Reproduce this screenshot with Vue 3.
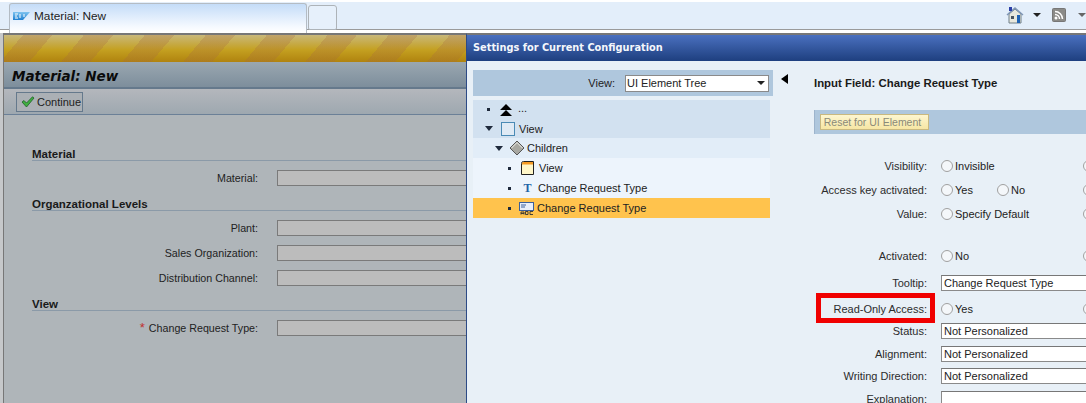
<template>
  <div class="page">
    <div class="tabbar">
      <div class="tab">
        <svg class="sap" width="17" height="8" viewBox="0 0 17 8">
          <defs>
            <linearGradient id="sapBlue" x1="0" y1="0" x2="0" y2="1">
              <stop offset="0" stop-color="#7fc4f0" />
              <stop offset="1" stop-color="#1f7fd0" />
            </linearGradient>
          </defs>
          <path d="M0 0H17L10 8H0Z" fill="url(#sapBlue)" />
          <path d="M2 2H5M2 4H4M2 6H5M7 2V6M11 2V5" stroke="#fff" stroke-width="1" fill="none" />
        </svg>
        <span>Material: New</span>
      </div>
      <div class="tab-empty"></div>
      <div class="tools">
        <svg width="18" height="18" viewBox="0 0 18 18">
          <path d="M3 8V17H15V8L9 3Z" fill="#e8e8de" stroke="#6f7f88" stroke-width="1" />
          <path d="M1 9L9 2L17 9" fill="none" stroke="#7f96b5" stroke-width="1.5" />
          <rect x="3" y="1" width="3" height="4" fill="#2b3fa8" />
          <rect x="11" y="9" width="3" height="8" fill="#1f63b5" />
          <rect x="5" y="10" width="3" height="3" fill="#4a5560" />
        </svg>
        <i class="caret"></i>
        <svg class="rss" width="14" height="14" viewBox="0 0 14 14">
          <rect x="0.5" y="0.5" width="13" height="13" rx="1" fill="#8b8b88" stroke="#777" />
          <circle cx="4" cy="10" r="1.5" fill="#fff" />
          <path d="M3 6.500A4.500 4.500 0 0 1 7.500 11M3 3.500A7.500 7.500 0 0 1 10.500 11" fill="none" stroke="#fff" stroke-width="1.500" />
        </svg>
        <i class="caret light"></i>
      </div>
    </div>

    <div class="main">
      <div class="left">
        <div class="stripes"></div>
        <div class="title">Material: New</div>
        <div class="toolbar">
          <button class="continue">
            <svg width="14" height="12" viewBox="0 0 14 12">
              <path d="M1 6L3 4.500L5.500 7L11.500 0.800L13 2L5.500 11Z" fill="#3fae3f" stroke="#1f5f2a" stroke-width="0.800" />
            </svg>
            Continue
          </button>
        </div>
        <div class="form">
          <template v-for="sec in sections" :key="sec.name">
            <div class="sec-head">{{ sec.name }}</div>
            <div class="sec-rows">
              <div v-for="f in sec.fields" :key="f.label" class="form-row">
                <label><span v-if="f.req" class="req">*</span>{{ f.label }}</label>
                <div class="grey-input"></div>
              </div>
            </div>
          </template>
        </div>
      </div>

      <div class="right">
        <div class="panel-head">Settings for Current Configuration</div>
        <div class="panel-body">
          <div class="tree-col">
            <div class="view-bar">
              <span>View:</span>
              <div class="select">
                UI Element Tree
                <i class="caret"></i>
              </div>
            </div>
            <div class="tree">
              <div class="node n0 first">
                <i class="dot"></i>
                <svg class="ico" width="12" height="12" viewBox="0 0 12 12">
                  <path d="M6 0L12 6H0ZM6 6L12 12H0Z" fill="#000" />
                </svg>
                <span class="dots">...</span>
              </div>
              <div class="node n0">
                <i class="tri"></i>
                <svg class="ico" width="14" height="14" viewBox="0 0 14 14">
                  <rect x="0.5" y="0.500" width="13" height="13" fill="#dfeaf5" stroke="#4a8ab5" />
                </svg>
                <span>View</span>
              </div>
              <div class="node n1">
                <i class="tri"></i>
                <svg class="ico" width="16" height="16" viewBox="0 0 16 16">
                  <path d="M8 1L15 8L8 15L1 8Z" fill="#a8a8a2" stroke="#555" />
                  <path d="M2.500 8L8 2.500L13.500 8" fill="none" stroke="#f4f4f0" />
                </svg>
                <span>Children</span>
              </div>
              <div class="node n2">
                <i class="dot"></i>
                <svg class="ico" width="13" height="14" viewBox="0 0 13 14">
                  <path d="M0.500 13.500V2.500Q0.500 0.500 2.500 0.500H12.500V13.500Z" fill="#fff6c8" stroke="#222" />
                  <path d="M1 3.500V2.500Q1 1 2.500 1H12V3.500Z" fill="#f59a23" />
                </svg>
                <span>View</span>
              </div>
              <div class="node n2">
                <i class="dot"></i>
                <span class="t-ico">T</span>
                <span>Change Request Type</span>
              </div>
              <div class="node n2 sel">
                <i class="dot"></i>
                <svg class="ico input-ico" width="15" height="13" viewBox="0 0 15 13">
                  <rect x="0.500" y="0.500" width="14" height="8" fill="#e8eef8" stroke="#3b5f9a" />
                  <path d="M2 3H7M2 5H6" stroke="#3b5f9a" />
                  <path d="M2 12.500V10H5V12.500M2 11.500H5M6.500 9.500V12.500H9L9 9.500ZM14 9.500H11V12.500H14" fill="none" stroke="#333" stroke-width="0.900" />
                </svg>
                <span>Change Request Type</span>
              </div>
            </div>
          </div>

          <div class="collapse"></div>

          <div class="detail">
            <div class="detail-title">Input Field: Change Request Type</div>
            <div class="reset-band"><button class="reset">Reset for UI Element</button></div>
            <div class="props">
              <div
                v-for="p in props"
                :key="p.label"
                class="prop"
                :class="p.cls"
              >
                <label>{{ p.label }}</label>
                <div v-if="p.input !== undefined" class="value-input">{{ p.input }}</div>
                <div v-else class="radios">
                  <span v-for="o in p.options" :key="o" class="radio-item">
                    <i class="radio"></i>{{ o }}
                  </span>
                  <i class="radio far"></i>
                </div>
              </div>
              <div class="red-box"></div>
            </div>
          </div>
        </div>
      </div>
    </div>
  </div>
</template>

<script setup>
const sections = [
  { name: 'Material', fields: [{ label: 'Material:' }] },
  {
    name: 'Organzational Levels',
    fields: [
      { label: 'Plant:' },
      { label: 'Sales Organization:' },
      { label: 'Distribution Channel:' },
    ],
  },
  { name: 'View', fields: [{ label: 'Change Request Type:', req: true }] },
]

const props = [
  { label: 'Visibility:', options: ['Invisible'], cls: 'h24' },
  { label: 'Access key activated:', options: ['Yes', 'No'], cls: 'h24' },
  { label: 'Value:', options: ['Specify Default'], cls: 'h24' },
  { label: 'Activated:', options: ['No'], cls: 'h24 gap-top' },
  { label: 'Tooltip:', input: 'Change Request Type', cls: 'h30' },
  { label: 'Read-Only Access:', options: ['Yes'], cls: 'h22' },
  { label: 'Status:', input: 'Not Personalized', cls: 'h22' },
  { label: 'Alignment:', input: 'Not Personalized', cls: 'h23' },
  { label: 'Writing Direction:', input: 'Not Personalized', cls: 'h22' },
  { label: 'Explanation:', input: '', cls: 'h24' },
]
</script>

<style>
html, body { margin: 0; background: #fff; overflow: hidden; }
</style>

<style scoped>
.page {
  width: 1086px;
  height: 403px;
  overflow: hidden;
  font-family: "Liberation Sans", Arial, sans-serif;
  font-size: 11px;
  color: #222;
  background: #fff;
  display: flex;
  flex-direction: column;
}

.tabbar {
  flex: none;
  height: 33px;
  box-sizing: border-box;
  padding: 3px 0 0 9px;
  display: flex;
  align-items: flex-start;
  background: linear-gradient(#fff 0 2px, #e3eefa 2px 29px, #9a9a9a 29px 30px, #fff 30px);
}
.tab {
  width: 298px;
  height: 30px;
  box-sizing: border-box;
  border: 1px solid #b4bcc4;
  border-bottom: 0;
  border-radius: 3px 3px 0 0;
  background: linear-gradient(#c4dcf8, #f6faff 80%, #fff);
  display: flex;
  align-items: center;
  gap: 4px;
  padding: 0 0 5px 3px;
  font-size: 11.800px;
  color: #1d1d1d;
}
.tab-empty {
  width: 29px;
  height: 25px;
  margin: 2px 0 0 1px;
  box-sizing: border-box;
  border: 1px solid #adb3b8;
  border-radius: 3px 3px 2px 2px;
  background: #e6f0fb;
}
.tools {
  margin-left: auto;
  display: flex;
  align-items: center;
  height: 24px;
}
.tools .rss { margin-left: 11px; }
.caret {
  display: inline-block;
  width: 0;
  height: 0;
  border: 4px solid transparent;
  border-top: 4px solid #222;
  border-bottom: 0;
}
.tools .caret { margin-left: 9px; }
.tools .caret.light { border-top-color: #666; margin-left: 12px; }

.main {
  flex: 1;
  min-height: 0;
  display: flex;
  padding-left: 3px;
  background: #c6c8ca;
}
.left {
  width: 463px;
  flex: none;
  box-sizing: border-box;
  border-left: 1px solid #777;
  border-top: 2px solid #777;
  background: #afb5b9;
  display: flex;
  flex-direction: column;
}
.stripes {
  flex: none;
  height: 27px;
  background:
    repeating-linear-gradient(130deg, transparent 0 14.500px, rgba(165,105,65,.26) 14.500px 36.800px, transparent 36.800px 46.700px),
    linear-gradient(#c9b87a, #c4a020 55%, #b0830f);
}
.title {
  flex: none;
  height: 27px;
  box-sizing: border-box;
  padding: 6px 0 0 8px;
  font: italic bold 13.500px "DejaVu Sans", sans-serif;
  color: #0a0a0a;
  background: linear-gradient(#9aa7b0, #7d8e9c);
  border-bottom: 2px solid #65798c;
}
.toolbar {
  flex: none;
  height: 26px;
  box-sizing: border-box;
  padding: 3px 0 0 12px;
  background: linear-gradient(#b4b7bc, #9ea8b0);
  border-bottom: 1px solid #6b8097;
}
.continue {
  height: 20px;
  width: 67px;
  padding: 0 0 0 4px;
  box-sizing: border-box;
  border: 1px solid #65798c;
  background: #abb0b5;
  display: flex;
  align-items: center;
  gap: 2px;
  font: 11px "Liberation Sans", sans-serif;
  color: #222;
}
.form {
  padding: 32px 0 0 28px;
}
.sec-head {
  height: 13px;
  font-weight: bold;
  color: #1a1a1a;
  line-height: 14px;
  font-size: 11.500px;
  border-bottom: 1px solid #8b9aa8;
}
.sec-rows {
  padding: 9px 0 11px;
  display: flex;
  flex-direction: column;
  gap: 9px;
  font-size: 10.700px;
}
.form-row {
  display: flex;
  align-items: center;
  height: 16px;
}
.form-row label {
  width: 226px;
  text-align: right;
  margin-right: 19px;
  color: #222;
}
.req {
  color: #c03030;
  font-size: 13px;
  line-height: 10px;
  margin-right: 4px;
}
.grey-input {
  flex: 1;
  height: 16px;
  box-sizing: border-box;
  border: 1px solid #7a7a7a;
  border-right: 0;
  background: #bcbcbc;
}

.right {
  flex: 1;
  min-width: 0;
  display: flex;
  flex-direction: column;
  background: #e8f0f7;
  border-left: 1px solid #2c4a86;
  border-top: 2px solid #777;
}
.panel-head {
  flex: none;
  height: 26px;
  box-sizing: border-box;
  padding: 7px 0 0 6px;
  font: bold 9.800px "DejaVu Sans", sans-serif;
  color: #f4f7fc;
  background: linear-gradient(#4a70bf, #1e3f7f);
}
.panel-body {
  flex: 1;
  display: flex;
  align-items: flex-start;
  padding-left: 6px;
}
.tree-col {
  width: 300px;
  padding-top: 9px;
  flex: none;
}
.view-bar {
  height: 26px;
  background: #afc7dd;
  display: flex;
  align-items: center;
  justify-content: flex-end;
  gap: 10px;
  padding-right: 4px;
}
.select {
  width: 144px;
  height: 17px;
  box-sizing: border-box;
  background: #fff;
  border: 1px solid #8a8a8a;
  padding-left: 1px;
  line-height: 15px;
  display: flex;
  align-items: center;
  justify-content: space-between;
}
.select .caret { margin-right: 3px; }
.tree {
  width: 297px;
  margin-top: 4px;
}
.node {
  height: 20px;
  display: flex;
  align-items: center;
  background: #edf4fc;
  color: #222;
}
.node.n0 { background: #d2e1f0; padding-left: 12px; height: 19px; }
.node.first { padding-left: 14px; }
.node.n1 { background: #e2edf8; padding-left: 22px; }
.node.n2 { padding-left: 35px; }
.node.sel { background: #ffc34d; }
.dot {
  width: 3px;
  height: 3px;
  background: #1f2a3c;
  flex: none;
}
.tri {
  width: 0;
  height: 0;
  border: 4px solid transparent;
  border-top: 5px solid #1f2a3c;
  border-bottom: 0;
  flex: none;
}
.first .ico { margin-left: 10px; margin-right: 6px; }
.n0 .tri + .ico { margin-left: 8px; margin-right: 4px; }
.n1 .ico { margin-left: 6px; margin-right: 2px; }
.n2 .ico { margin-left: 10px; margin-right: 5px; }
.n2 .input-ico { margin-left: 8px; margin-right: 3px; }
.t-ico {
  width: 13px;
  margin: 0 4px 0 10px;
  font: bold 12px "Liberation Serif", serif;
  color: #1f63a8;
  text-align: center;
}
.dots { margin-top: -3px; }

.collapse {
  width: 0;
  height: 0;
  margin: 13px 0 0 8px;
  border: 5px solid transparent;
  border-right: 7px solid #000;
  border-left: 0;
  flex: none;
}
.detail {
  flex: 1;
  min-width: 0;
  margin-left: 26px;
}
.detail-title {
  padding-top: 15px;
  height: 34px;
  box-sizing: border-box;
  font-weight: bold;
  font-size: 11.400px;
  line-height: 14px;
  color: #1a1a1a;
}
.reset-band {
  margin-top: 15px;
  height: 24px;
  box-sizing: border-box;
  padding: 4px 0 0 5px;
  background: #afc7dd;
  border-left: 1px solid #9db4cc;
}
.reset {
  display: block;
  width: 109px;
  height: 16px;
  padding: 0 4px 0 0;
  box-sizing: border-box;
  border: 1px solid #c9b980;
  background: linear-gradient(#fdf6d0, #f6e6a4);
  font: 10.500px "Liberation Sans", sans-serif;
  color: #8a8a78;
}
.props {
  position: relative;
  padding-top: 20px;
}
.prop {
  display: flex;
  align-items: center;
  width: 280px;
}
.h24 { height: 24px; }
.h23 { height: 23px; }
.h22 { height: 22px; }
.h30 { height: 30px; }
.gap-top { margin-top: 18px; }
.prop label {
  width: 113px;
  text-align: right;
  margin-right: 14px;
  color: #2c2c2c;
  white-space: nowrap;
  flex: none;
}
.radios {
  flex: 1;
  display: flex;
  align-items: center;
  position: relative;
}
.radio-item {
  display: inline-flex;
  align-items: center;
  gap: 3px;
  margin-right: 24px;
}
.radio {
  display: inline-block;
  width: 12px;
  height: 12px;
  box-sizing: border-box;
  border: 1.500px solid #a0a0a0;
  border-radius: 50%;
  background: #f4f7fa;
}
.radio.far {
  position: absolute;
  left: 142px;
  top: 50%;
  margin-top: -6px;
}
.radio-item { gap: 2px; }
.value-input {
  flex: 1;
  height: 16px;
  box-sizing: border-box;
  border: 1px solid #8a8a8a;
  border-top-color: #777;
  border-right: 0;
  background: #fff;
  line-height: 14px;
  padding-left: 2px;
  color: #222;
}
.red-box {
  position: absolute;
  left: 2px;
  top: 159px;
  width: 119px;
  height: 30px;
  box-sizing: border-box;
  border: 5px solid #f00000;
}
</style>
